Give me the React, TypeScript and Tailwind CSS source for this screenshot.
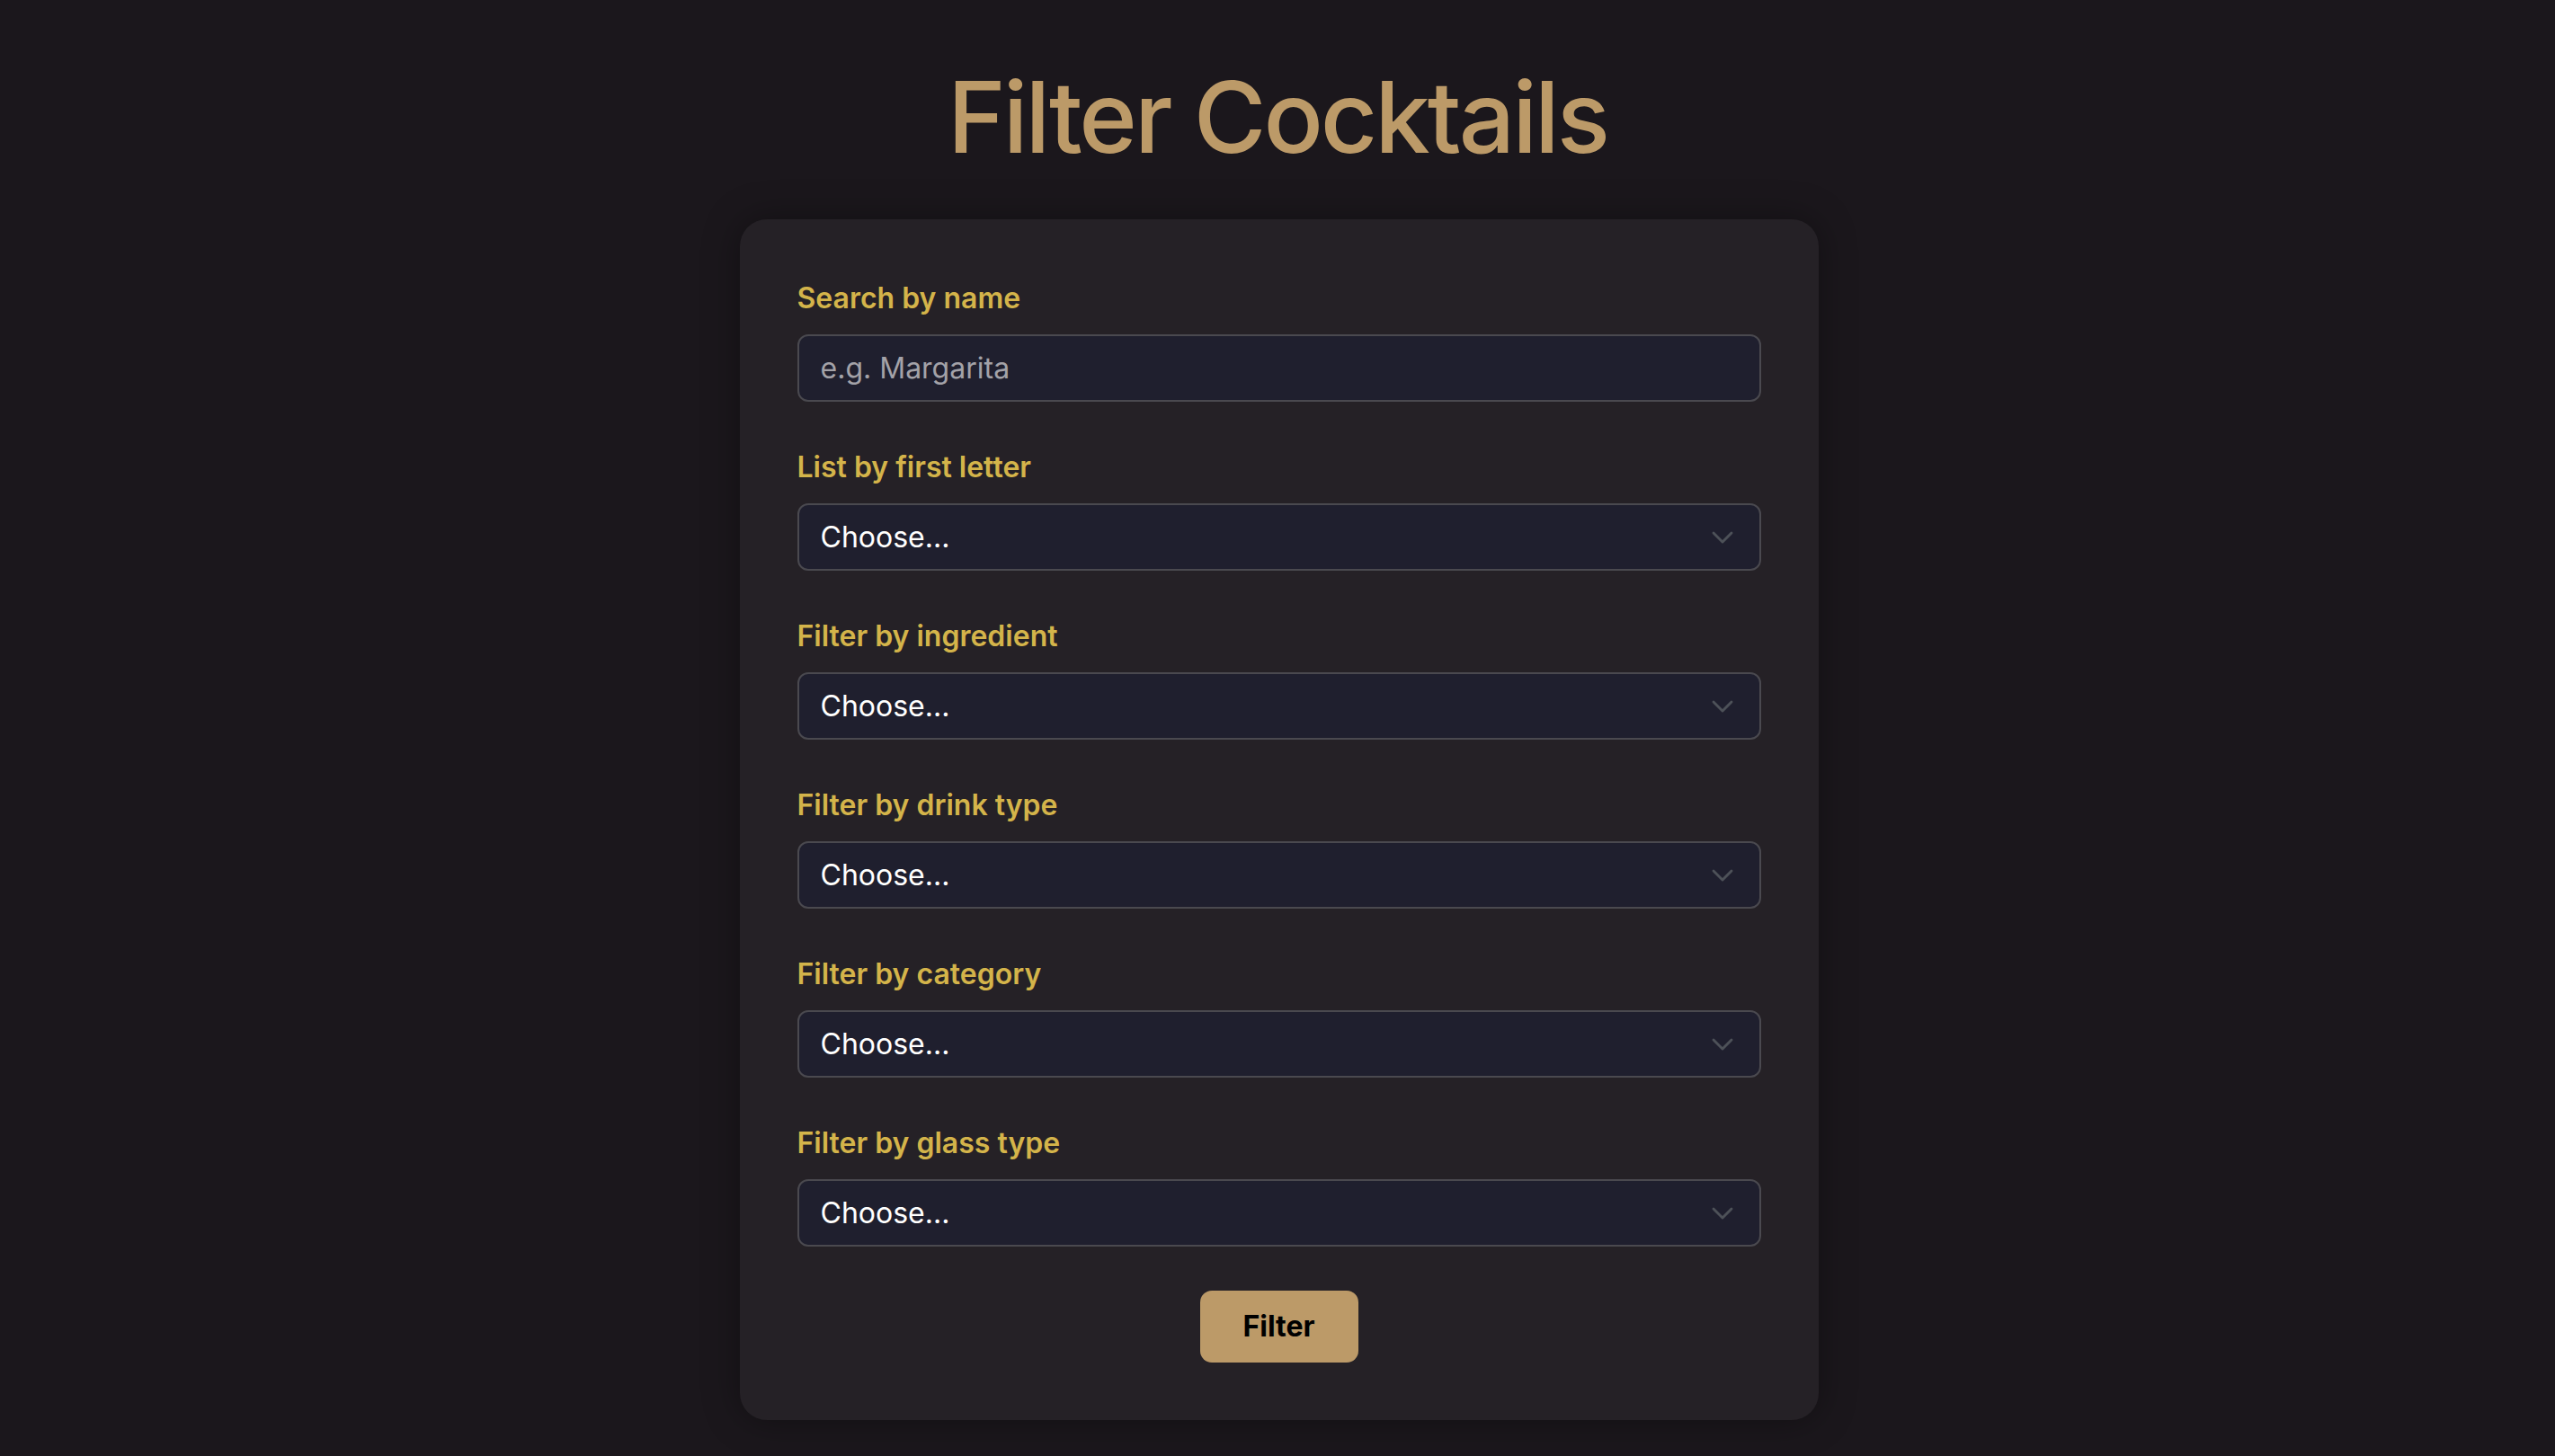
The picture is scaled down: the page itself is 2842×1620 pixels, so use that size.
import { ChevronDown } from 'lucide-react'

const LABEL_CLASS = 'block text-[32px] leading-[48px] font-semibold text-[#d4b44a] mb-4'
const FIELD_CLASS =
  'w-full h-[75px] rounded-[12px] border-2 border-[#4a494f] bg-[#1f1f2e] pl-6 pr-20 text-[32px] text-white outline-none appearance-none'

const SELECTS = [
  { id: 'letter', label: 'List by first letter' },
  { id: 'ingredient', label: 'Filter by ingredient' },
  { id: 'type', label: 'Filter by drink type' },
  { id: 'category', label: 'Filter by category' },
  { id: 'glass', label: 'Filter by glass type' },
]

export default function App() {
  return (
    <div
      className="min-h-screen bg-[#1b171c] flex flex-col items-center"
      style={{ fontFamily: 'Inter, "Noto Sans", sans-serif' }}
    >
      <h1 className="mt-[42px] text-[110px] leading-[176px] font-medium tracking-[-3px] text-[#bc9a68]">
        Filter Cocktails
      </h1>
      <div className="mt-[26px] ml-[3px] w-[1200px] rounded-[30px] bg-[#252126] px-16 pt-16 pb-[64px] shadow-[0_0_40px_rgba(0,0,0,0.35)]">
        <div className="mb-[49px]">
          <label className={LABEL_CLASS}>Search by name</label>
          <input
            type="text"
            placeholder="e.g. Margarita"
            className={FIELD_CLASS + ' placeholder:text-[#a3a2a8]'}
          />
        </div>
        {SELECTS.map(s => (
          <div key={s.id} className="mb-[49px]">
            <label className={LABEL_CLASS}>{s.label}</label>
            <div className="relative">
              <select className={FIELD_CLASS} defaultValue="">
                <option value="">Choose...</option>
              </select>
              <ChevronDown
                className="absolute right-[23px] top-1/2 -translate-y-1/2 w-10 h-10 text-[#4d5158] pointer-events-none"
                strokeWidth={1.7}
              />
            </div>
          </div>
        ))}
        <div className="flex justify-center">
          <button className="w-[176px] h-[80px] rounded-[13px] bg-[#bc9a68] text-[32px] font-bold text-black">
            Filter
          </button>
        </div>
      </div>
    </div>
  )
}
